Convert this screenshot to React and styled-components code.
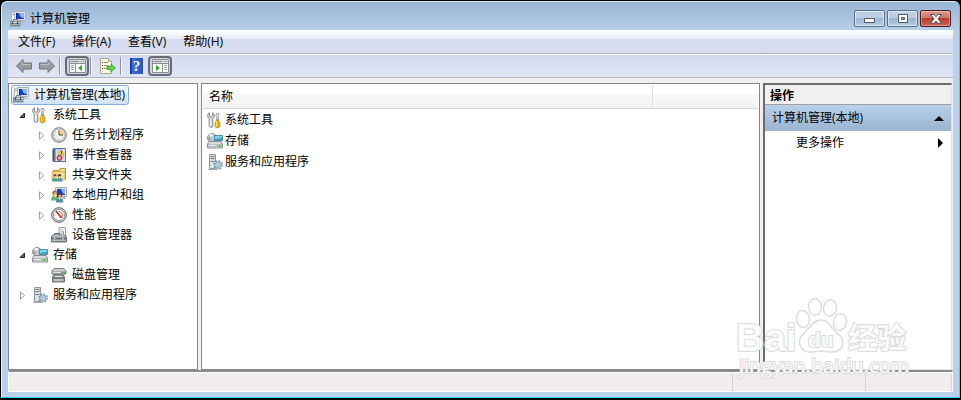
import React from "react";
import styled, { createGlobalStyle, css } from "styled-components";

const GlobalStyle = createGlobalStyle`
  * {
    box-sizing: border-box;
  }
  body {
    margin: 0;
    background: #000;
    color: #000;
    font-family: "Open Sans", "Noto Sans CJK SC", sans-serif;
    font-size: 12px;
    line-height: 16px;
  }
  button {
    padding: 0;
    border: 0;
    background: none;
    color: inherit;
    font: inherit;
    text-align: left;
  }
  svg {
    display: block;
    flex: none;
  }
`;

const Window = styled.div`
  position: relative;
  display: flex;
  flex-direction: column;
  min-height: calc(100vh - 3px);
  margin: 1px 1px 0;
  padding: 0 6px 5px;
  border: 1px solid #e4eefa;
  border-right-color: #35d5ef;
  border-bottom-color: #22cdee;
  border-radius: 6px 6px 0 0;
  background: linear-gradient(#98b5d4, #b9d1ea 30px, #b9d1ea);
`;

const TitleBar = styled.header`
  display: flex;
  align-items: center;
  gap: 4px;
  height: 28px;
  padding: 5px 2px 0;
`;

const Title = styled.h1`
  flex: 1;
  margin: 0;
  font-size: 12px;
  font-weight: 400;
`;

const Controls = styled.div`
  display: flex;
  gap: 2px;
`;

const Control = styled.button`
  display: flex;
  align-items: center;
  justify-content: center;
  width: 31px;
  height: 17px;
  border: 1px solid #56708c;
  border-radius: 2px;
  box-shadow: inset 0 0 0 1px rgba(255, 255, 255, 0.55);
  background: linear-gradient(#bccfe4 50%, #9db5d0 50%, #b5cbe3);
  ${props =>
    props.$close &&
    css`
      border-color: #4c1921;
      box-shadow: inset 0 0 0 1px rgba(255, 255, 255, 0.35);
      background: linear-gradient(#dc9b8e, #cd7463 50%, #b83c27 50%, #cc6650);
    `}
`;

const Client = styled.div`
  display: flex;
  flex: 1;
  flex-direction: column;
  background: #f0f0f0;
`;

const MenuBar = styled.nav`
  display: flex;
  gap: 17px;
  height: 24px;
  padding: 4px 10px;
  border-bottom: 1px solid #b1b5c2;
  background: linear-gradient(#fff, #e6ebf6 9px, #d4daed 9px, #d8deef);
`;

const ToolBar = styled.div`
  display: flex;
  align-items: center;
  height: 24px;
  padding-left: 4px;
  border-top: 1px solid #fafbfe;
  border-bottom: 1px solid #b1b5c2;
  background: linear-gradient(#d4daed, #e0e6f4);
`;

const Tool = styled.button`
  display: flex;
  align-items: center;
  justify-content: center;
  width: 23px;
  height: 20px;
  ${props =>
    props.$pressed &&
    css`
      width: 24px;
      border: 2px solid #686b76;
      border-radius: 4px;
      background: #cfd3dd;
    `}
`;

const Divider = styled.span`
  width: 1px;
  height: 18px;
  margin: 0 ${props => props.$after || 4}px 0 ${props => props.$before || 1}px;
  background: #8f949f;
  box-shadow: 1px 0 #f6f8fd;
`;

const Panes = styled.main`
  display: flex;
  flex: 1;
  gap: 3px;
  padding-top: 5px;
`;

const TreePane = styled.nav`
  width: 190px;
  padding: 1px 2px;
  border: 1px solid #828790;
  background: #fff;
`;

const Tree = styled.ul`
  margin: 0;
  padding: 0;
  list-style: none;
`;

const TreeRow = styled.li`
  display: flex;
  align-items: center;
  gap: 3px;
  height: 20px;
  padding-left: ${props => 4 + (props.$depth - 1) * 19}px;
`;

const Root = styled.li`
  display: flex;
  height: 20px;
`;

const Expander = styled.button`
  display: flex;
  align-items: center;
  justify-content: center;
  width: 14px;
  height: 14px;
`;

const Indent = styled.span`
  width: 14px;
`;

const Node = styled.button`
  display: flex;
  align-items: center;
  gap: 5px;
  height: 20px;
  white-space: nowrap;
  ${props =>
    props.$selected &&
    css`
      padding: 0 3px 0 1px;
      border: 1px solid #84acdd;
      border-radius: 3px;
      background: linear-gradient(#f0f6fd, #cfe2f9);
    `}
`;

const ListPane = styled.section`
  flex: 1;
  min-width: 0;
  padding: 1px;
  border: 1px solid #828790;
  background: #fff;
`;

const Table = styled.table`
  width: 100%;
  border-collapse: collapse;
  table-layout: fixed;
`;

const HeadCell = styled.th`
  height: 23px;
  padding: 2px 6px 0;
  border-bottom: 1px solid #d5d5d5;
  background: linear-gradient(#fff 9px, #f7f8fa 9px, #f1f2f4);
  font-weight: 400;
  text-align: left;
  &:last-child {
    width: 106px;
    border-left: 1px solid #dedfe1;
  }
`;

const Cell = styled.td`
  height: 21px;
  padding: 2px 4px 0;
`;

const ListItem = styled.div`
  display: flex;
  align-items: center;
  gap: 2px;
`;

const ActionPane = styled.aside`
  width: 189px;
  margin-right: 1px;
  border: 2px solid #6a6a6a;
  border-right: 1px solid #e3e3e3;
  border-bottom: 1px solid #e3e3e3;
  background: #fff;
`;

const ActionTitle = styled.h2`
  height: 20px;
  margin: 0;
  padding: 3px 5px 0;
  border-bottom: 1px solid #a0a0a0;
  background: #f0f0f0;
  font-size: 12px;
  font-weight: 700;
`;

const ActionGroup = styled.button`
  display: flex;
  align-items: center;
  justify-content: space-between;
  width: 100%;
  height: 26px;
  padding: 0 7px;
  background: linear-gradient(#b9d1ea, #99b4d1);
`;

const ActionItem = styled(ActionGroup)`
  height: 24px;
  padding: 0 7px 0 31px;
  background: none;
`;

const StatusBar = styled.footer`
  display: flex;
  height: 22px;
  border: 1px solid #fff;
  border-top: 2px solid #8b8b8b;
  background: #f0edec;
  box-shadow: inset 0 1px #fff;
`;

const StatusCell = styled.span`
  flex: ${props => (props.$width ? "none" : 1)};
  width: ${props => props.$width || 0}px;
  margin-top: 2px;
  border-right: 1px solid #d5d3d3;
`;

const Watermark = styled.div`
  position: absolute;
  right: 46px;
  bottom: 15px;
  width: 176px;
  pointer-events: none;
`;

const Computer = () => (
  <svg width="16" height="16" viewBox="0 0 16 16" aria-hidden="true">
    <path d="M4.500.5h11v9h-11z" fill="#e3e6e6" stroke="#a9aeb0" />
    <path d="M6 2h8v6H6z" fill="#1540c4" />
    <path d="M9 2h5v5C11 7 9.500 5 9 2z" fill="#8bb4f3" />
    <path d="M6 2h1v6H6z" fill="#0a258a" />
    <path d="M10 10h2v1h3v1h-5z" fill="#b6bbbc" />
    <path d="M1.500 1.500h3v8h-3z" fill="#f4f4f4" stroke="#b4b8ba" />
    <path d="M2 3h2v1H2z" fill="#9ba2a5" />
    <path d="M3 8h5v2h2.500v5.500H0V10h3z" fill="#7b8990" />
    <path d="M4 9h3v1H4zM1 11h9v1H1z" fill="#d9dfe1" />
    <path d="M1 13h9v1H1z" fill="#a5b0b5" />
    <path d="M2 11h1v2H2zM7 11h1v2H7z" fill="#2d373c" />
  </svg>
);

const Tools = () => (
  <svg width="16" height="16" viewBox="0 0 16 16" aria-hidden="true">
    <path
      d="M2.500.8v3.400l1.500 1 1.500-1V.8C8 2 8 5 5.800 6.500v8q-1.800 1.800-3.600 0v-8C0 5 0 2 2.500.8z"
      fill="#d7dadc"
      stroke="#777d82"
      strokeWidth=".9"
    />
    <path d="M3.500 7v7" stroke="#fff" />
    <path d="M9.500 1.500h2l.5 2-.8 1v4h-1.400v-4L9 3.500z" fill="#e6e9eb" stroke="#83898e" strokeWidth=".8" />
    <path d="M9 8h3v1.500l1 1v4l-1 1H9l-1-1v-4l1-1z" fill="#eaae11" stroke="#b97b08" strokeWidth=".6" />
    <path d="M9.500 9v5.500" stroke="#ffe387" />
  </svg>
);

const Clock = () => (
  <svg width="16" height="16" viewBox="0 0 16 16" aria-hidden="true">
    <circle cx="8" cy="8" r="7.300" fill="#d6d8d8" stroke="#777b7e" />
    <circle cx="8" cy="8" r="5.600" fill="#f4f3e9" stroke="#aaa99f" strokeWidth=".6" />
    <path d="M8 8V2.600A5.400 5.400 0 0 1 13.400 8z" fill="#f1d294" />
    <path d="M8 3.500V8h4" fill="none" stroke="#444" />
    <path d="M8 13v-1M3 8h1M4.500 4.500l.6.600M4.500 11.500l.6-.6M11.500 11.500l-.6-.6" stroke="#888" strokeWidth=".7" />
  </svg>
);

const EventLog = () => (
  <svg width="16" height="16" viewBox="0 0 16 16" aria-hidden="true">
    <path d="M2.500 1.500h12v13h-12z" fill="#8aa6d3" stroke="#5570a2" />
    <path d="M5 2h9v12H5z" fill="#dbe6f5" />
    <path d="M6 3h4M6 5h3M6 7h7M6 9h7M6 11h7" stroke="#a0b5d6" />
    <path d="M1 3h3M1 5h3M1 7h3M1 9h3M1 11h3M1 13h3" stroke="#343e59" />
    <path d="m10.500 2.500 3 5H7.500z" fill="#ffdc25" stroke="#c2a11a" strokeWidth=".6" />
    <path d="M10 4h1v2h-1zM10 6.500h1v.7h-1z" fill="#222" />
    <circle cx="8.500" cy="11" r="2.700" fill="#dd3b35" stroke="#b22b27" strokeWidth=".5" />
    <path d="m7.300 9.800 2.400 2.400m0-2.400-2.400 2.400" stroke="#fff" />
  </svg>
);

const SharedFolder = () => (
  <svg width="16" height="16" viewBox="0 0 16 16" aria-hidden="true">
    <path d="M2 3.500h6l1-2h5.500v11H2z" fill="#ecc75f" stroke="#ab852e" strokeWidth=".8" />
    <path d="M10 2.500h3.500v1H10z" fill="#fff" />
    <path d="M1 5h13v8H1z" fill="#f6df91" stroke="#c7a043" strokeWidth=".6" />
    <circle cx="4" cy="8.500" r="1.600" fill="#6f4a2b" />
    <circle cx="8.500" cy="8.500" r="1.600" fill="#5c371e" />
    <path d="M3.500 9h1.500v1H3.500zM8 9h1.500v1H8z" fill="#f4c492" />
    <path d="M1 14.500C1 12 2 10.500 3.800 10.500s2.500 1.500 2.500 4z" fill="#4ca47c" />
    <path d="M6 14.500c0-2.500.9-4 2.500-4s3 1.500 3 4z" fill="#4594a9" />
    <path d="m3.300 10.500.8 1.500.7-1.500zm4.700 0 .7 1.500.7-1.500z" fill="#fff" />
  </svg>
);

const Users = () => (
  <svg width="16" height="16" viewBox="0 0 16 16" aria-hidden="true">
    <path d="M4.500.5h11v9h-11z" fill="#e0e4e5" stroke="#a2a8ab" />
    <path d="M6 2h8v6H6z" fill="#1740c4" />
    <path d="M10 2h4v5c-2 0-3-2-4-5z" fill="#86b0f0" />
    <path d="M12 10h2v1h1v1h-4z" fill="#aeb4b8" />
    <circle cx="3.800" cy="6" r="2.500" fill="#a4733b" />
    <path d="M3 5.500h2.500v3H3z" fill="#f2bd85" />
    <path d="M0 13.500c0-3.500 1.300-5 3.800-5s3.500 1.500 3.500 5z" fill="#6eb16b" />
    <circle cx="8.500" cy="8.500" r="2.500" fill="#5b3e26" />
    <path d="M7.500 8h2.500v3H7.500z" fill="#eab17a" />
    <path d="M5 15.500c0-3.500 1.300-4.500 3.500-4.500s3.800 1 3.800 4.500z" fill="#4f8f9e" />
    <path d="m3.300 8.500 1 2 1-2zm4.200 2.500 1 2 1-2z" fill="#fff" />
  </svg>
);

const Gauge = () => (
  <svg width="16" height="16" viewBox="0 0 16 16" aria-hidden="true">
    <circle cx="8" cy="8" r="7.300" fill="#d7d7d7" stroke="#606365" />
    <circle cx="8" cy="8" r="5.600" fill="#fff" stroke="#777" strokeWidth=".7" />
    <path d="m5 4 5.500 7" stroke="#d12e29" strokeWidth="1.800" />
    <path d="M8 4.500c3 0 4 3.500 2.500 6.500" fill="none" stroke="#c8423d" />
    <path d="M3.500 8h1M5 11.500l.6-.6M12.500 8h-1" stroke="#777" strokeWidth=".8" />
  </svg>
);

const Devices = () => (
  <svg width="16" height="16" viewBox="0 0 16 16" aria-hidden="true">
    <path d="M8 .5h6.500v9H8z" fill="#f5f6f6" stroke="#979da1" />
    <path d="M9.500 2h2v6h-2z" fill="#c6cacc" />
    <path d="M12 4h1v3h-1z" fill="#4bbd42" />
    <path d="M3.500 8V6.500h5V8" fill="none" stroke="#555c61" />
    <path d="M1.500 8h12l2 2v5H.5v-5z" fill="#8e989e" stroke="#545c62" strokeWidth=".8" />
    <path d="M2 8.500h11l1 1H1z" fill="#dae0e3" />
    <path d="M1 11h14v1H1z" fill="#66717a" />
    <path d="M3 10.500h1v2H3zM11.500 10.500h1v2h-1z" fill="#e6eaec" />
    <path d="M1 13h14v1H1z" fill="#b4bdc2" />
  </svg>
);

const Storage = () => (
  <svg width="16" height="16" viewBox="0 0 16 16" aria-hidden="true">
    <circle cx="5" cy="5" r="4.500" fill="#c7cccc" stroke="#737b7b" strokeWidth=".8" />
    <path d="M5 5 2 1.800Q4 .6 6 1z" fill="#f5f8f4" />
    <path d="m5 5-3 3Q.8 6.500 1 4z" fill="#96a29d" />
    <circle cx="5" cy="5" r="1.300" fill="#fff" stroke="#8d9494" strokeWidth=".6" />
    <path d="M7.500 2.500h8v5h-8z" fill="#37a4d2" stroke="#247899" strokeWidth=".7" />
    <path d="M8 3h7v1.500L8 6z" fill="#83d3ee" />
    <path d="M2 8.500h12l1.500 2.500v4H.5v-4z" fill="#d8dbdc" stroke="#737a7e" strokeWidth=".8" />
    <path d="M1 11h14v3.500H1z" fill="#b9bec0" />
    <path d="M2 12.500h7" stroke="#eceeee" />
    <path d="M11.500 12h2v2h-2z" fill="#4ccc2c" />
  </svg>
);

const Disks = () => (
  <svg width="16" height="16" viewBox="0 0 16 16" aria-hidden="true">
    <path d="M3 1.500h10l2 2.500v3H1V4z" fill="#cccfcf" stroke="#5f6466" strokeWidth=".8" />
    <path d="M1 4.500h14v3H1z" fill="#888d90" />
    <path d="M2 5.500h8" stroke="#e6e6e6" />
    <path d="M12 5h2v1.500h-2z" fill="#43c937" />
    <path d="M3 8h9l1.500 2v5h-12v-5z" fill="#a3a8aa" stroke="#50575b" strokeWidth=".8" />
    <path d="M2 10.500h11v1H2z" fill="#444a4e" />
    <path d="M4 9h7v1H4z" fill="#eceeee" />
    <path d="M3 13h8" stroke="#dadddd" />
  </svg>
);

const Services = () => (
  <svg width="16" height="16" viewBox="0 0 16 16" aria-hidden="true">
    <path d="M2.500.5h6v14h-6z" fill="#d9dddf" stroke="#92999e" />
    <path d="M3.500 2.500h4M3.500 4.500h4M3.500 7.500h4" stroke="#727b81" />
    <path d="M3.500 9.500h4v4h-4z" fill="#eef0f1" />
    <path d="M3.500 11h1v1h-1z" fill="#69b253" />
    <path d="M1 15.500h8" stroke="#a4aaae" />
    <circle cx="11" cy="11" r="4.100" fill="none" stroke="#7893ac" strokeWidth="1.600" strokeDasharray="1.600 1.620" />
    <circle cx="11" cy="11" r="3.200" fill="#b7cfe1" stroke="#7895ae" strokeWidth=".7" />
    <circle cx="11" cy="11" r="1.200" fill="#fff" stroke="#7893a9" strokeWidth=".6" />
  </svg>
);

const Arrow = ({ forward }) => (
  <svg width="18" height="16" viewBox="0 0 18 16" aria-hidden="true">
    <path
      d={forward ? "M16.500 8 10 1.500v3.500H1.500v6H10v3.500z" : "M1.500 8 8 1.500v3.500h8.500v6H8v3.500z"}
      fill="#999c9f"
      stroke="#707479"
    />
    <path d={forward ? "M2.500 6.500H11v-2.500" : "M15.500 6.500H7v-2.500"} fill="none" stroke="#bfc1c3" />
  </svg>
);

const PaneIcon = ({ right }) => (
  <svg width="17" height="14" viewBox="0 0 17 14" aria-hidden="true">
    <path d="M.5.5h16v13H.5z" fill="#fafafa" stroke="#8b8e91" />
    <path d="M1 1h15v3H1z" fill="#d8dadd" />
    <path d="M2 2.500h8M12 2.500h1M14 2.500h1M1 4.500h15" stroke="#8b8e91" />
    <path d={right ? "M10.500 5v8" : "M6.500 5v8"} stroke="#8b8e91" />
    <path d={right ? "M12 6.500h3M12 8.500h3M12 10.500h3" : "M2 6.500h3M2 8.500h3M2 10.500h3"} stroke="#9a9da1" />
    <path d={right ? "M4 6v6l4-3z" : "M13 6v6L9 9z"} fill="#35a829" />
  </svg>
);

const ExportIcon = () => (
  <svg width="17" height="16" viewBox="0 0 17 16" aria-hidden="true">
    <path d="M1.500.5h8l3 3v12h-11z" fill="#fffbe7" stroke="#aca78f" />
    <path d="M9.500.5v3h3" fill="#e3dcc0" stroke="#aca78f" />
    <path d="M3 4.500h1M3 7.500h1M3 10.500h1" stroke="#333" />
    <path d="M5 4.500h4M5 7.500h5M5 10.500h4" stroke="#9e987b" />
    <path d="M8 8.500h4V6l4.500 4-4.500 4v-2.500H8z" fill="#61d449" stroke="#329d27" strokeWidth=".8" />
  </svg>
);

const HelpGlyph = styled.span`
  width: 13px;
  height: 16px;
  background: linear-gradient(90deg, #1a3d9e 2px, #3f6ed1 2px, #2a56be);
  color: #fff;
  font-family: "Liberation Serif", serif;
  font-size: 15px;
  font-weight: 700;
  line-height: 16px;
  text-align: center;
`;

const nodes = [
  { name: "系统工具", icon: Tools, depth: 1, open: true },
  { name: "任务计划程序", icon: Clock, depth: 2, open: false },
  { name: "事件查看器", icon: EventLog, depth: 2, open: false },
  { name: "共享文件夹", icon: SharedFolder, depth: 2, open: false },
  { name: "本地用户和组", icon: Users, depth: 2, open: false },
  { name: "性能", icon: Gauge, depth: 2, open: false },
  { name: "设备管理器", icon: Devices, depth: 2 },
  { name: "存储", icon: Storage, depth: 1, open: true },
  { name: "磁盘管理", icon: Disks, depth: 2 },
  { name: "服务和应用程序", icon: Services, depth: 1, open: false }
];

const items = nodes.filter(node => node.depth === 1);

const TreeItem = ({ name, icon: Icon, depth, open }) => (
  <TreeRow $depth={depth}>
    {open === undefined ? (
      <Indent />
    ) : (
      <Expander aria-label={name} aria-expanded={open}>
        <svg width="8" height="9" viewBox="0 0 8 9" aria-hidden="true">
          {open ? (
            <path d="M6.500 2v4.500H2z" fill="#595959" stroke="#262626" />
          ) : (
            <path d="M2.500.8v7.400l4.200-3.700z" fill="#fff" stroke="#a1a1a1" />
          )}
        </svg>
      </Expander>
    )}
    <Node>
      <Icon />
      {name}
    </Node>
  </TreeRow>
);

const Baidu = () => (
  <Watermark>
    <svg width="176" height="84" viewBox="0 0 176 84" role="img" aria-label="Baidu 经验">
      <g fill="#fff" fillOpacity=".85" stroke="#dcdcdc" strokeWidth="1.500">
        <ellipse cx="66" cy="21" rx="6.500" ry="8.500" transform="rotate(-8 66 21)" />
        <ellipse cx="78" cy="9" rx="6.500" ry="8.300" />
        <ellipse cx="93" cy="10" rx="6.500" ry="8.300" transform="rotate(12 93 10)" />
        <ellipse cx="103" cy="24" rx="6.500" ry="8.300" transform="rotate(12 103 24)" />
        <path d="M84 22c7 0 9 6 13 10 5 5 10 8 8.500 15-2 8-10 8-21.500 6-11 2-19 2-21-6-2-7 2-10 7-15 4-4 7-10 14-10z" />
        <g fontWeight="700" paintOrder="stroke" strokeWidth="2">
          <text x="-1" y="53" fontSize="39" fontFamily="Liberation Sans, sans-serif">Bai</text>
          <text x="71" y="49" fontSize="21" fontFamily="Liberation Sans, sans-serif">du</text>
          <text x="111" y="51" fontSize="29" fontFamily="Noto Sans CJK SC, sans-serif">经验</text>
          <text x="2" y="75" fontSize="20" fontWeight="400" fontFamily="Open Sans, sans-serif">
            jingyan.baidu.com
          </text>
        </g>
      </g>
    </svg>
  </Watermark>
);

const App = () => (
  <>
    <GlobalStyle />
    <Window>
      <TitleBar>
        <Computer />
        <Title>计算机管理</Title>
        <Controls>
          <Control aria-label="最小化">
            <svg width="12" height="9" viewBox="0 0 12 9">
              <path d="M.5 4.500h10v4H.5z" fill="#fff" stroke="#535966" />
            </svg>
          </Control>
          <Control aria-label="最大化">
            <svg width="12" height="10" viewBox="0 0 12 10">
              <path d="M1.500.5h9v8h-9z" fill="#fff" stroke="#535966" />
              <path d="M4.500 3.500h3v2h-3z" fill="#91a9c4" stroke="#535966" />
            </svg>
          </Control>
          <Control $close aria-label="关闭">
            <svg width="12" height="10" viewBox="0 0 12 10">
              <path
                d="M.7.500H4L6 2.800 8 .5h3.300L8 4.800l3.300 4.500H8L6 6.900 4 9.300H.7L4 4.800z"
                fill="#fff"
                stroke="#535966"
              />
            </svg>
          </Control>
        </Controls>
      </TitleBar>
      <Client>
        <MenuBar>
          <button>文件(F)</button>
          <button>操作(A)</button>
          <button>查看(V)</button>
          <button>帮助(H)</button>
        </MenuBar>
        <ToolBar>
          <Tool aria-label="后退">
            <Arrow />
          </Tool>
          <Tool aria-label="前进">
            <Arrow forward />
          </Tool>
          <Divider $after={5} />
          <Tool $pressed aria-label="显示/隐藏控制台树">
            <PaneIcon />
          </Tool>
          <Divider $after={5} />
          <Tool aria-label="导出列表">
            <ExportIcon />
          </Tool>
          <Divider $after={4} />
          <Tool aria-label="帮助">
            <HelpGlyph>?</HelpGlyph>
          </Tool>
          <Tool $pressed aria-label="显示/隐藏操作窗格">
            <PaneIcon right />
          </Tool>
        </ToolBar>
        <Panes>
          <TreePane>
            <Tree>
              <Root>
                <Node $selected>
                  <Computer />
                  计算机管理(本地)
                </Node>
              </Root>
              {nodes.map(node => (
                <TreeItem key={node.name} {...node} />
              ))}
            </Tree>
          </TreePane>
          <ListPane>
            <Table>
              <thead>
                <tr>
                  <HeadCell>名称</HeadCell>
                  <HeadCell />
                </tr>
              </thead>
              <tbody>
                {items.map(({ name, icon: Icon }) => (
                  <tr key={name}>
                    <Cell>
                      <ListItem>
                        <Icon />
                        {name}
                      </ListItem>
                    </Cell>
                    <Cell />
                  </tr>
                ))}
              </tbody>
            </Table>
          </ListPane>
          <ActionPane>
            <ActionTitle>操作</ActionTitle>
            <ActionGroup>
              计算机管理(本地)
              <svg width="10" height="5" viewBox="0 0 10 5" aria-hidden="true">
                <path d="M5 0l5 5H0z" />
              </svg>
            </ActionGroup>
            <ActionItem>
              更多操作
              <svg width="8" height="10" viewBox="0 0 8 10" aria-hidden="true">
                <path d="M2 0l5 5-5 5z" />
              </svg>
            </ActionItem>
          </ActionPane>
        </Panes>
        <StatusBar>
          <StatusCell />
          <StatusCell $width={133} />
          <StatusCell $width={86} />
        </StatusBar>
      </Client>
      <Baidu />
    </Window>
  </>
);

export default App;
